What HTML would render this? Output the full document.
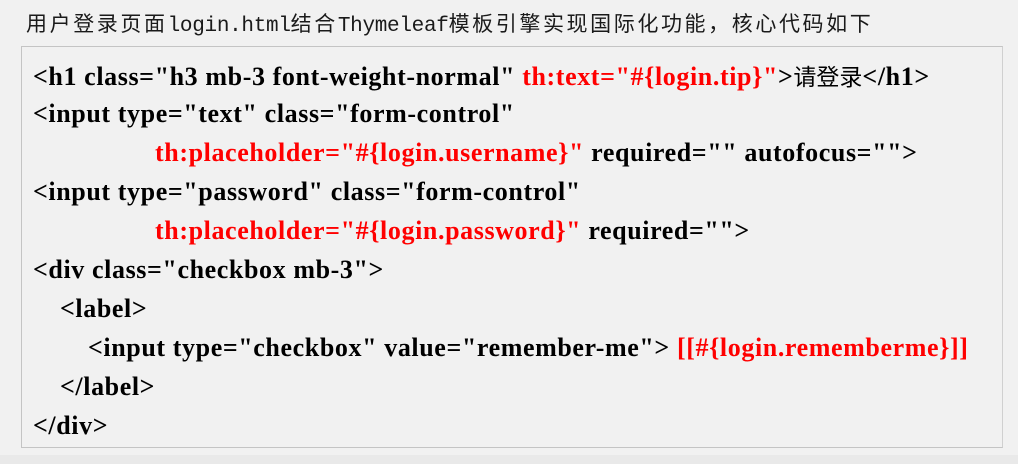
<!DOCTYPE html>
<html><head><meta charset="utf-8"><style>
html,body{margin:0;padding:0;background:#f1f1f1;width:1018px;height:464px;overflow:hidden}
.t{position:absolute;left:26px;top:8px;font-size:21px;line-height:30px;color:#1a1a1a;white-space:nowrap;font-family:"Noto Sans CJK SC",sans-serif;letter-spacing:2.6px}
.t .m{font-family:"Liberation Mono",monospace;font-size:21px;letter-spacing:-0.3px}
.box{position:absolute;left:21px;top:46px;width:982px;height:402px;border:1px solid #c4c4c4;border-right-color:#d0d0d0;box-sizing:border-box}
.l{position:absolute;font-family:"Liberation Serif",serif;font-weight:bold;font-size:26px;letter-spacing:0.6px;color:#000;white-space:nowrap;line-height:28px}
.r{color:#f00}
.c{font-family:"Noto Sans CJK SC",sans-serif;font-weight:normal;font-size:23px;letter-spacing:0}
.bot{position:absolute;left:0;top:455px;width:1018px;height:9px;background:#e9e9e9}
</style></head><body>
<div class="t">用户登录页面<span class="m">login.html</span>结合<span class="m">Thymeleaf</span>模板引擎实现国际化功能，核心代码如下</div>
<div class="box"></div>
<div class="l" style="left:33px;top:61px">&lt;h1 class="h3 mb-3 font-weight-normal" <span class="r">th:text="#{login.tip}"</span>&gt;<span class="c">请登录</span>&lt;/h1&gt;</div>
<div class="l" style="left:33px;top:100px">&lt;input type="text" class="form-control"</div>
<div class="l" style="left:155px;top:139px"><span class="r">th:placeholder="#{login.username}"</span> required="" autofocus=""&gt;</div>
<div class="l" style="left:33px;top:178px">&lt;input type="password" class="form-control"</div>
<div class="l" style="left:155px;top:217px"><span class="r">th:placeholder="#{login.password}"</span> required=""&gt;</div>
<div class="l" style="left:33px;top:256px">&lt;div class="checkbox mb-3"&gt;</div>
<div class="l" style="left:60px;top:295px">&lt;label&gt;</div>
<div class="l" style="left:88px;top:334px">&lt;input type="checkbox" value="remember-me"&gt; <span class="r">[[#{login.rememberme}]]</span></div>
<div class="l" style="left:60px;top:373px">&lt;/label&gt;</div>
<div class="l" style="left:33px;top:412px">&lt;/div&gt;</div>
<div class="bot"></div>
</body></html>
